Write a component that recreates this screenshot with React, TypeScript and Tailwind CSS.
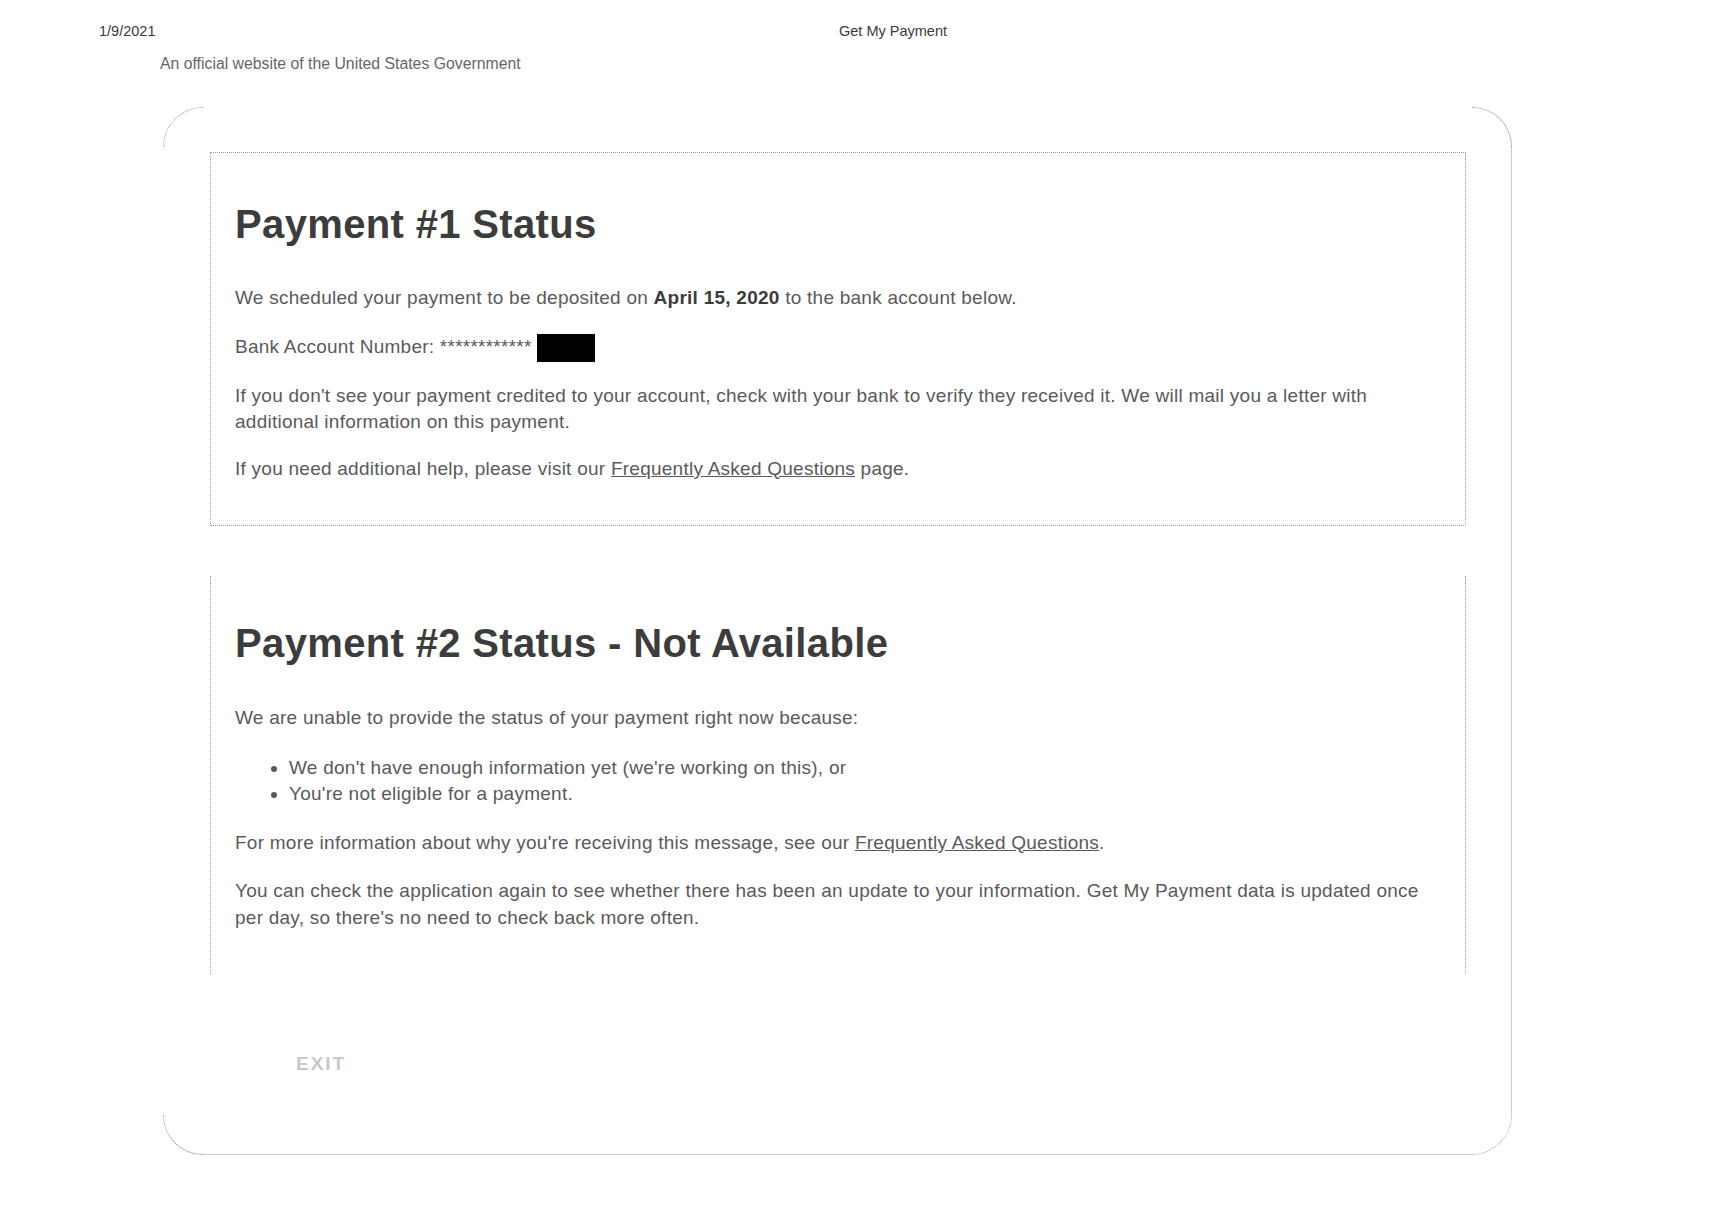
import React from "react";

export default function App() {
  return (
    <div className="w-[1727px] min-h-[1209px] bg-white font-['Liberation_Sans',Arial,sans-serif] text-[#5a5a5a]">
      {/* print header */}
      <div className="flex items-center pt-[21px] h-[41px]">
        <div className="w-[839px] pl-[99px] text-[14.5px] leading-[20px] text-[#3a3a3a]">1/9/2021</div>
        <div className="text-[14.5px] leading-[20px] text-[#3a3a3a]">Get My Payment</div>
      </div>
      <div className="pl-[160px] mt-[13px] text-[15.8px] leading-[20px] text-[#666]">
        An official website of the United States Government
      </div>

      {/* outer rounded box */}
      <div className="relative ml-[163px] mt-[33px] w-[1349px] h-[1048px] border-r border-b border-dotted border-[#9a9a9a] rounded-[40px] pl-[47px] pr-[45px] pt-[45px]">
        <div className="absolute top-0 left-0 w-[40px] h-[40px] border-t border-l border-dotted border-[#9a9a9a] rounded-tl-[40px]" />
        <div className="absolute top-0 right-[-1px] w-[40px] h-[40px] border-t border-r border-dotted border-[#9a9a9a] rounded-tr-[40px]" />
        <div className="absolute bottom-[-1px] left-0 w-[40px] h-[40px] border-b border-l border-dotted border-[#9a9a9a] rounded-bl-[40px]" />

        {/* Card 1 */}
        <div className="border border-dotted border-[#9a9a9a] px-[24px] pt-[47px] pb-[43px] text-[19px] tracking-[0.25px] leading-[26.5px]">
          <h1 className="text-[40px] leading-[48px] font-bold tracking-[0.35px] text-[#3c3c3c]">Payment #1 Status</h1>
          <p className="mt-[37px]">
            We scheduled your payment to be deposited on <b className="font-bold text-[#3c3c3c]">April 15, 2020</b> to the bank account below.
          </p>
          <p className="mt-[22px]">
            Bank Account Number: ************ <span className="inline-block w-[58px] h-[28px] bg-black align-middle" />
          </p>
          <p className="mt-[21px]">
            If you don't see your payment credited to your account, check with your bank to verify they received it. We will mail you a letter with additional information on this payment.
          </p>
          <p className="mt-[20px]">
            If you need additional help, please visit our <span className="underline">Frequently Asked Questions</span> page.
          </p>
        </div>

        {/* Card 2 */}
        <div className="mt-[50px] border-l border-r border-dotted border-[#9a9a9a] px-[24px] pt-[43px] pb-[43px] text-[19px] tracking-[0.25px] leading-[26.5px]">
          <h2 className="text-[40px] leading-[48px] font-bold tracking-[0.35px] text-[#3c3c3c]">Payment #2 Status - Not Available</h2>
          <p className="mt-[38px]">We are unable to provide the status of your payment right now because:</p>
          <ul className="mt-[23px] list-disc pl-[54px]">
            <li>We don't have enough information yet (we're working on this), or</li>
            <li>You're not eligible for a payment.</li>
          </ul>
          <p className="mt-[22px]">
            For more information about why you're receiving this message, see our <span className="underline">Frequently Asked Questions</span>.
          </p>
          <p className="mt-[22px]">
            You can check the application again to see whether there has been an update to your information. Get My Payment data is updated once per day, so there's no need to check back more often.
          </p>
        </div>

        <div className="mt-[79px] ml-[86px] text-[19px] leading-[22px] font-bold tracking-[2px] text-[#c8c8c8]">EXIT</div>
      </div>
    </div>
  );
}
